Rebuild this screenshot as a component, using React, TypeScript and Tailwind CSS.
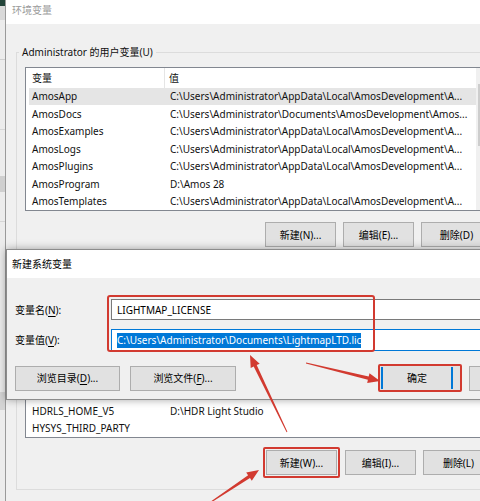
import React from "react";

type Pair = [string, string];

const AMOS_LOCAL = "C:\\Users\\Administrator\\AppData\\Local\\AmosDevelopment\\A...";

const USER_VARS: Pair[] = [
  ["AmosApp", AMOS_LOCAL],
  ["AmosDocs", "C:\\Users\\Administrator\\Documents\\AmosDevelopment\\Amos..."],
  ["AmosExamples", AMOS_LOCAL],
  ["AmosLogs", AMOS_LOCAL],
  ["AmosPlugins", AMOS_LOCAL],
  ["AmosProgram", "D:\\Amos 28"],
  ["AmosTemplates", AMOS_LOCAL],
];

const SYSTEM_VARS: Pair[] = [
  ["ComSpec", "C:\\Windows\\system32\\cmd.exe"],
  ["DriverData", "C:\\Windows\\System32\\Drivers\\DriverData"],
  ["HDRLS_HOME", "D:\\HDR Light Studio"],
  ["HDRLS_HOME_V5", "D:\\HDR Light Studio"],
  ["HYSYS_THIRD_PARTY", ""],
];

// tapered annotation arrow: thin tail, wide shaft near the head, triangular tip
function arrowPoints(tail: [number, number], tip: [number, number]) {
  const [x0, y0] = tail;
  const [x1, y1] = tip;
  const len = Math.hypot(x1 - x0, y1 - y0);
  const dx = (x1 - x0) / len;
  const dy = (y1 - y0) / len;
  const nx = -dy;
  const ny = dx;
  const head = 12;
  const wing = 5;
  const bx = x1 - dx * head;
  const by = y1 - dy * head;
  const pts: [number, number][] = [
    [x0 + nx * 0.4, y0 + ny * 0.4],
    [bx + nx * 1.7, by + ny * 1.7],
    [bx + nx * wing, by + ny * wing],
    [x1, y1],
    [bx - nx * wing, by - ny * wing],
    [bx - nx * 1.7, by - ny * 1.7],
    [x0 - nx * 0.4, y0 - ny * 0.4],
  ];
  return pts.map(([x, y]) => `${x.toFixed(1)},${y.toFixed(1)}`).join(" ");
}

function WinButton({ children, className = "" }: { children: React.ReactNode; className?: string }) {
  return (
    <div
      className={
        "flex h-[25px] shrink-0 items-center justify-center border border-[#adadad] bg-[#e1e1e1] text-black " +
        className
      }
    >
      <span className="whitespace-nowrap">{children}</span>
    </div>
  );
}

function Mn({ children }: { children: React.ReactNode }) {
  return <span className="underline underline-offset-2">{children}</span>;
}

function VarList({ rows, highlight, scroll }: { rows: Pair[]; highlight?: number; scroll?: boolean }) {
  return (
    <div className="relative flex h-full w-[469px] flex-col border border-[#828790] bg-white">
      <div className="flex h-[20px] shrink-0 items-center">
        <div className="flex h-full w-[139px] items-center border-r border-[#e5e5e5] pl-[6px]">变量</div>
        <div className="pl-[4px]">值</div>
      </div>
      <div className="flex min-h-0 flex-1 flex-col justify-end overflow-hidden pl-[3px]">
        {rows.map(([name, value], i) => (
          <div
            key={name}
            className={
              "flex h-[17.5px] shrink-0 items-center whitespace-nowrap " +
              (i === highlight ? "bg-[#e5e5e5]" : "")
            }
          >
            <div className="w-[136px] shrink-0 pl-[3px]">{name}</div>
            <div className="pl-[5px]">{value}</div>
          </div>
        ))}
      </div>
      {scroll && (
        <div className="absolute right-0 top-0 flex h-full w-[17px] flex-col bg-[#f0f0f0] pt-[16px]">
          <div className="mx-[2px] h-[62px] bg-[#cdcdcd]" />
        </div>
      )}
    </div>
  );
}

export default function App() {
  return (
    <div className="relative flex h-[501px] w-[480px] overflow-hidden bg-[#f0f0f0] font-[family-name:Noto_Sans,Noto_Sans_CJK_SC,sans-serif] text-[10px] leading-[16px] text-[#111]">
      {/* window behind, only its edge shows */}
      <div className="flex w-[5px] shrink-0 flex-col bg-[#ececec]">
        <div className="h-[6px] bg-[#24453a]" />
        <div className="h-[14px] bg-[#d9d9d9]" />
        <div className="h-[40px] border-b border-[#cfcfcf]" />
        <div className="h-[70px] border-b border-[#d6d6d6]" />
        <div className="h-[46px]" />
        <div className="h-[16px] bg-[#cfcfcf]" />
        <div className="h-[30px] border-b border-[#d6d6d6]" />
        <div className="h-[170px]" />
        <div className="h-[18px] bg-[#d4d4d4]" />
      </div>

      {/* 环境变量 */}
      <div className="flex min-w-0 flex-1 flex-col border-l border-[#9a9a9a]">
        <div className="h-[24px] shrink-0 bg-white pl-[6px] pt-[2px] text-[#9b9b9b]">环境变量</div>
        <div className="flex flex-1 flex-col pl-[10px] pt-[20px]">
          <fieldset className="w-[495px] shrink-0 border border-[#dcdcdc] p-0">
            <legend className="ml-[2px] px-[3px] leading-[16px]">Administrator 的用户变量(U)</legend>
            <div className="px-[8px] pb-[10px] pt-[7px]">
              <div className="h-[144px]">
                <VarList rows={USER_VARS} highlight={0} scroll />
              </div>
              <div className="mt-[11px] flex gap-[7px] pl-[240px]">
                <WinButton className="w-[71px]">新建(N)...</WinButton>
                <WinButton className="w-[71px]">编辑(E)...</WinButton>
                <WinButton className="w-[71px]">删除(D)</WinButton>
              </div>
            </div>
          </fieldset>

          <fieldset className="mt-[4px] w-[495px] shrink-0 border border-[#dcdcdc] p-0">
            <legend className="ml-[2px] px-[3px] leading-[16px]">系统变量(S)</legend>
            <div className="px-[8px] pb-[13px] pt-[7px]">
              <div className="h-[153px]">
                <VarList rows={SYSTEM_VARS} />
              </div>
              <div className="mt-[11px] flex items-center gap-[7px] pl-[240px]">
                <div className="-m-[2px] rounded-[2px] border-2 border-[#d23a30] p-[1px]">
                  <WinButton className="w-[71px] border-[#9c9c9c]">新建(W)...</WinButton>
                </div>
                <WinButton className="w-[71px]">编辑(I)...</WinButton>
                <WinButton className="w-[71px]">删除(L)</WinButton>
              </div>
            </div>
          </fieldset>
        </div>
      </div>

      {/* 新建系统变量 dialog */}
      <div className="absolute left-[6px] top-[249px] flex h-[151px] w-[495px] flex-col border border-[#8c8c8c] shadow-[0_0_8px_rgba(0,0,0,0.35)]">
        <div className="flex h-[28px] shrink-0 items-center bg-white pl-[5px] text-black">新建系统变量</div>
        <div className="flex flex-1 flex-col bg-[#f0f0f0] pl-[8px] pt-[21px]">
          <div className="flex">
            <div className="w-[96px] shrink-0 text-black">
              <div className="flex h-[21px] items-center">
                <span>
                  变量名(<Mn>N</Mn>):
                </span>
              </div>
              <div className="mt-[9px] flex h-[22px] items-center">
                <span>
                  变量值(<Mn>V</Mn>):
                </span>
              </div>
            </div>
            <div className="relative">
              <div className="flex h-[21px] w-[380px] items-center border border-[#7a7a7a] bg-white pl-[5px] text-black">
                LIGHTMAP_LICENSE
              </div>
              <div className="mt-[9px] flex h-[22px] w-[380px] items-center border border-[#0078d7] bg-white pl-[5px]">
                <span className="bg-[#0078d7] leading-[15px] text-white">C:\Users\Administrator\Documents\LightmapLTD.lic</span>
              </div>
              <div className="absolute -left-[4px] -top-[4px] h-[57px] w-[268px] rounded-[3px] border-2 border-[#d23a30]" />
            </div>
          </div>
          <div className="mt-[13px] flex items-center gap-[10px]">
            <WinButton className="w-[105px]">
              浏览目录(<Mn>D</Mn>)...
            </WinButton>
            <WinButton className="w-[106px]">
              浏览文件(<Mn>F</Mn>)...
            </WinButton>
            <div className="ml-[132px] flex h-[28px] w-[84px] shrink-0 rounded-[2px] border-2 border-[#d23a30] bg-[#e1e1e1] py-[1px] pl-[1px]">
              <div className="flex w-[72px] items-center justify-center border-x-2 border-[#0078d7] text-black">确定</div>
            </div>
            <WinButton className="-ml-[3px] w-[71px]">取消</WinButton>
          </div>
        </div>
      </div>

      {/* red annotation arrows */}
      <svg className="pointer-events-none absolute inset-0" width="480" height="501" viewBox="0 0 480 501">
        <polygon points={arrowPoints([205, 506], [259, 470])} fill="#d23a30" />
        <polygon points={arrowPoints([287, 432], [250, 355])} fill="#d23a30" />
        <polygon points={arrowPoints([306, 363], [380, 381])} fill="#d23a30" />
      </svg>
    </div>
  );
}
